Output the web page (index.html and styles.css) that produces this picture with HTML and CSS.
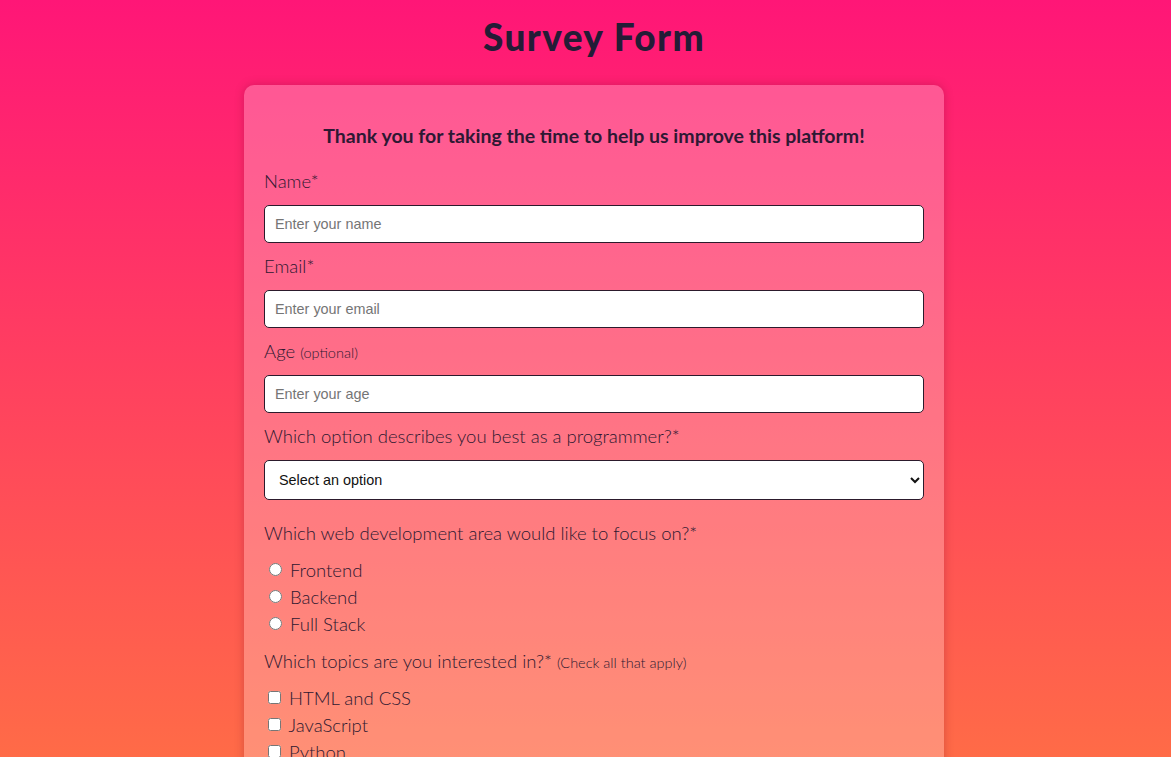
FILE: index.html
```html
<!DOCTYPE html>
<html lang="en">
<head>
<meta charset="utf-8">
<title>Survey Form</title>
<link rel="stylesheet" href="styles.css">
</head>
<body>
<header class="header">
  <h1 class="title">Survey Form</h1>
</header>
<main class="card">
  <p class="intro">Thank you for taking the time to help us improve this platform!</p>
  <form class="form">
    <div class="group">
      <label class="label" for="name">Name*</label>
      <input class="field" id="name" type="text" placeholder="Enter your name">
    </div>
    <div class="group">
      <label class="label" for="email">Email*</label>
      <input class="field" id="email" type="email" placeholder="Enter your email">
    </div>
    <div class="group">
      <label class="label" for="age">Age <span class="hint">(optional)</span></label>
      <input class="field" id="age" type="number" placeholder="Enter your age">
    </div>
    <div class="group">
      <label class="label" for="role">Which option describes you best as a programmer?*</label>
      <select class="field select" id="role">
        <option>Select an option</option>
        <option>Beginner</option>
        <option>Intermediate</option>
        <option>Advanced</option>
      </select>
    </div>
    <div class="group group-choices">
      <p class="label">Which web development area would like to focus on?*</p>
      <ul class="choices">
        <li class="choice"><label><input type="radio" name="area"> Frontend</label></li>
        <li class="choice"><label><input type="radio" name="area"> Backend</label></li>
        <li class="choice"><label><input type="radio" name="area"> Full Stack</label></li>
      </ul>
    </div>
    <div class="group group-choices">
      <p class="label">Which topics are you interested in?* <span class="hint">(Check all that apply)</span></p>
      <ul class="choices checks">
        <li class="choice"><label><input type="checkbox"> HTML and CSS</label></li>
        <li class="choice"><label><input type="checkbox"> JavaScript</label></li>
        <li class="choice"><label><input type="checkbox"> Python</label></li>
      </ul>
    </div>
  </form>
</main>
</body>
</html>
```
FILE: styles.css
```css
html, body {
  margin: 0;
  padding: 0;
}
body {
  min-height: 100vh;
  padding-left: 17px;
  background: linear-gradient(180deg, #ff1677 0px, #ff6b47 757px) fixed;
  font-family: Lato, "Open Sans", sans-serif;
  color: #2e1b33;
}
.header {
  padding-top: 16px;
}
.title {
  margin: 0;
  text-align: center;
  font-family: Lato, sans-serif;
  font-weight: 900;
  font-size: 37px;
  line-height: 42px;
  color: #241c36;
  letter-spacing: 1.4px;
}
.card {
  width: 700px;
  box-sizing: border-box;
  margin: 27px auto 40px;
  padding: 20px 20px 30px;
  border-radius: 10px;
  background: rgba(255, 255, 255, 0.25);
  box-shadow: 0 0 10px rgba(90, 0, 30, 0.25);
}
.intro {
  margin: 20px 0 23px;
  text-align: center;
  font-weight: 700;
  font-size: 19.5px;
  line-height: 22px;
  color: #2e1833;
}
.form {
  display: flex;
  flex-direction: column;
}
.group {
  display: flex;
  flex-direction: column;
  gap: 13px;
  margin-bottom: 12px;
}
.label {
  margin: 0;
  display: block;
  font-size: 18.5px;
  line-height: 22px;
  height: 22px;
  font-weight: 300;
  color: #2e1830;
}
.hint {
  font-size: 14.5px;
  font-weight: 300;
  line-height: 1;
}
.field {
  box-sizing: border-box;
  width: 100%;
  height: 38px;
  margin: 0;
  padding: 0 10px;
  border: 1px solid #2c1a2c;
  border-radius: 5px;
  background: #fff;
  font-family: Arial, "Liberation Sans", sans-serif;
  font-size: 14.4px;
  color: #111;
}
.field::placeholder {
  color: #757575;
}
.select {
  height: 40px;
  padding: 0 10px;
  margin-bottom: 10px;
}
.group-choices {
  gap: 12px;
  margin-bottom: 13px;
}
.checks {
  margin-top: -1px;
}
.choices {
  list-style: none;
  margin: 0;
  padding: 0;
}
.choice {
  height: 27px;
  display: flex;
  align-items: center;
  font-size: 18.5px;
  font-weight: 300;
  color: #2e1830;
}
.choice label {
  display: flex;
  align-items: center;
  white-space: pre;
}
.choice input {
  margin-top: 0;
  margin-bottom: 0;
}
```
